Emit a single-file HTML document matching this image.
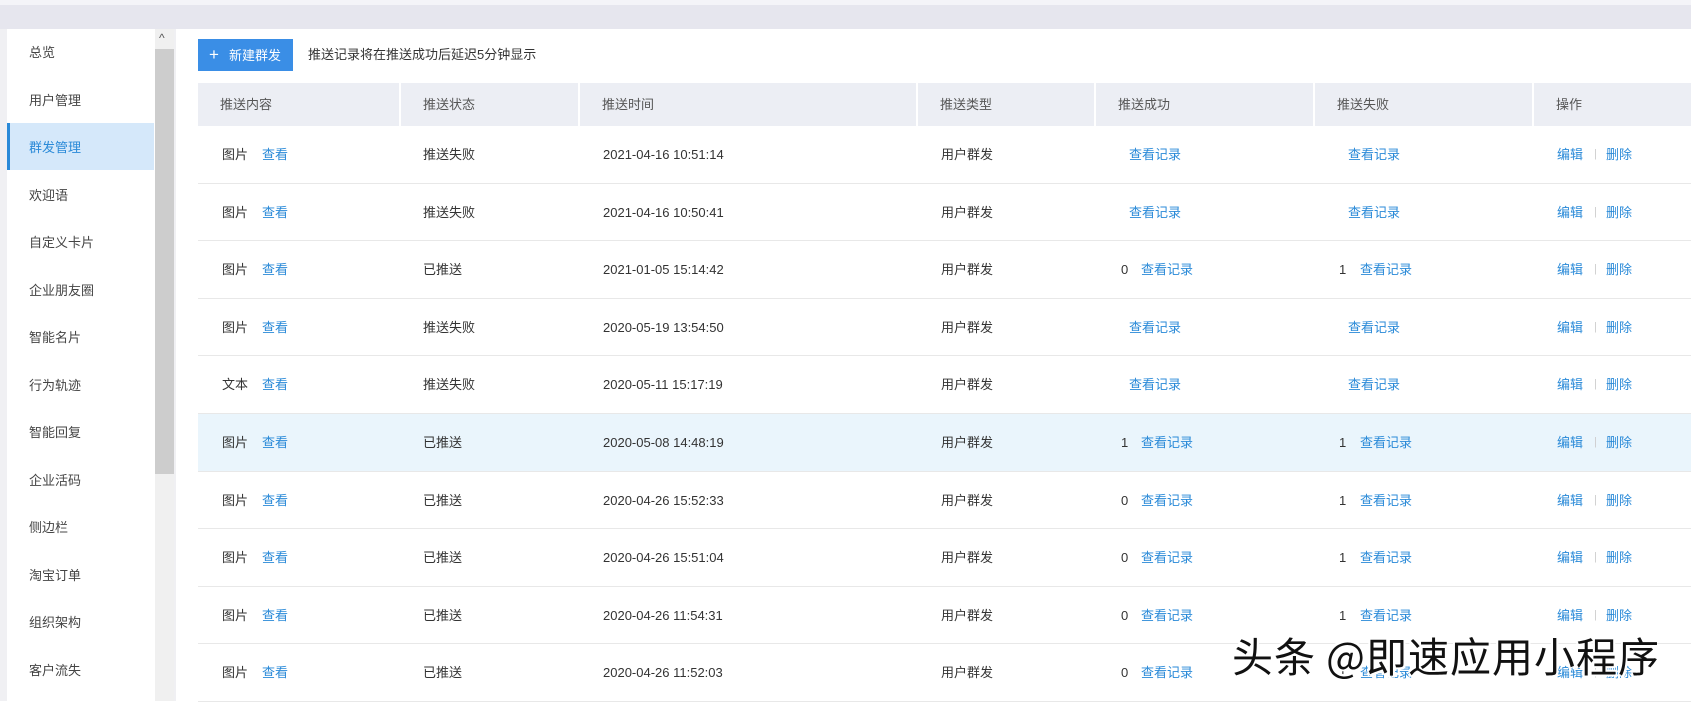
<!DOCTYPE html>
<html><head><meta charset="utf-8"><style>
*{margin:0;padding:0;box-sizing:border-box}
body{width:1691px;height:701px;overflow:hidden;background:#fff;font-family:"Liberation Sans","Noto Sans CJK SC",sans-serif;font-size:13px;color:#333;position:relative}
.a{position:absolute;white-space:nowrap}
.blue{color:#2a8ad8}
.si{position:absolute;left:7px;width:147px;height:47px;line-height:49px;padding-left:22px;color:#444}
.hd{position:absolute;top:83px;height:43px;line-height:43px;background:#eceef4;color:#555;padding-left:22px}
.row{position:absolute;left:198px;width:1493px;height:57.6px;border-bottom:1px solid #e8e8e8}
.row .a{top:0;line-height:57px}
.wm{position:absolute;left:1232px;top:624px;font-size:41px;color:#111;font-family:"Noto Sans CJK SC",sans-serif;text-shadow:2px 2px 0 #fff,-2px -2px 0 #fff,2px -2px 0 #fff,-2px 2px 0 #fff;letter-spacing:1px}
</style></head><body>
<div class="a" style="left:0;top:0;width:1691px;height:5px;background:#f4f4f8"></div>
<div class="a" style="left:0;top:5px;width:1691px;height:24px;background:#e6e6ee"></div>
<div class="a" style="left:0;top:29px;width:7px;height:672px;background:#f0f0f3"></div>
<div class="a" style="left:155px;top:29px;width:19px;height:672px;background:#f0f0f0"></div>
<div class="a" style="left:155px;top:49px;width:19px;height:425px;background:#cdcdcd"></div>
<div class="a" style="left:159px;top:31px;font-size:12px;color:#555">^</div>
<div class="a" style="left:174px;top:29px;width:2px;height:672px;background:#f0f0f3"></div>
<div class="si" style="top:28px">总览</div>
<div class="si" style="top:76px">用户管理</div>
<div class="si" style="top:123px;background:#d5e8fa;color:#2a8ad8;border-left:3px solid #2a8ad8;padding-left:19px">群发管理</div>
<div class="si" style="top:171px">欢迎语</div>
<div class="si" style="top:218px">自定义卡片</div>
<div class="si" style="top:266px">企业朋友圈</div>
<div class="si" style="top:313px">智能名片</div>
<div class="si" style="top:361px">行为轨迹</div>
<div class="si" style="top:408px">智能回复</div>
<div class="si" style="top:456px">企业活码</div>
<div class="si" style="top:503px">侧边栏</div>
<div class="si" style="top:551px">淘宝订单</div>
<div class="si" style="top:598px">组织架构</div>
<div class="si" style="top:646px">客户流失</div>
<div class="a" style="left:198px;top:39px;width:95px;height:32px;background:#3a8ee6;color:#fff;line-height:32px;padding-left:11px"><span style="font-size:17px;margin-right:10px">+</span>新建群发</div>
<div class="a" style="left:308px;top:39px;line-height:32px;color:#333">推送记录将在推送成功后延迟5分钟显示</div>
<div class="hd" style="left:198px;width:201px">推送内容</div>
<div class="hd" style="left:401px;width:177px">推送状态</div>
<div class="hd" style="left:580px;width:336px">推送时间</div>
<div class="hd" style="left:918px;width:176px">推送类型</div>
<div class="hd" style="left:1096px;width:217px">推送成功</div>
<div class="hd" style="left:1315px;width:217px">推送失败</div>
<div class="hd" style="left:1534px;width:157px">操作</div>
<div id="rows"></div>
<script>
var d=[["图片","推送失败","2021-04-16 10:51:14","",""],["图片","推送失败","2021-04-16 10:50:41","",""],["图片","已推送","2021-01-05 15:14:42","0","1"],["图片","推送失败","2020-05-19 13:54:50","",""],["文本","推送失败","2020-05-11 15:17:19","",""],["图片","已推送","2020-05-08 14:48:19","1","1"],["图片","已推送","2020-04-26 15:52:33","0","1"],["图片","已推送","2020-04-26 15:51:04","0","1"],["图片","已推送","2020-04-26 11:54:31","0","1"],["图片","已推送","2020-04-26 11:52:03","0","1"]];
var h="";d.forEach(function(r,i){var t=126+i*57.6;
h+='<div class="row" style="top:'+t+'px;'+(i==5?'background:#eaf5fc':'')+'">'+
'<div class="a" style="left:24px">'+r[0]+'</div><div class="a blue" style="left:64px">查看</div>'+
'<div class="a" style="left:225px">'+r[1]+'</div>'+
'<div class="a" style="left:405px">'+r[2]+'</div>'+
'<div class="a" style="left:743px">用户群发</div>'+
(r[3]?'<div class="a" style="left:923px">'+r[3]+'</div><div class="a blue" style="left:943px">查看记录</div>':'<div class="a blue" style="left:931px">查看记录</div>')+
(r[4]?'<div class="a" style="left:1141px">'+r[4]+'</div><div class="a blue" style="left:1162px">查看记录</div>':'<div class="a blue" style="left:1150px">查看记录</div>')+
'<div class="a blue" style="left:1359px">编辑</div><div class="a" style="left:1396px;color:#ccc;font-size:11px">|</div><div class="a blue" style="left:1408px">删除</div></div>';});
document.getElementById("rows").innerHTML=h;
</script>
<div class="wm">头条 @即速应用小程序</div>
</body></html>
